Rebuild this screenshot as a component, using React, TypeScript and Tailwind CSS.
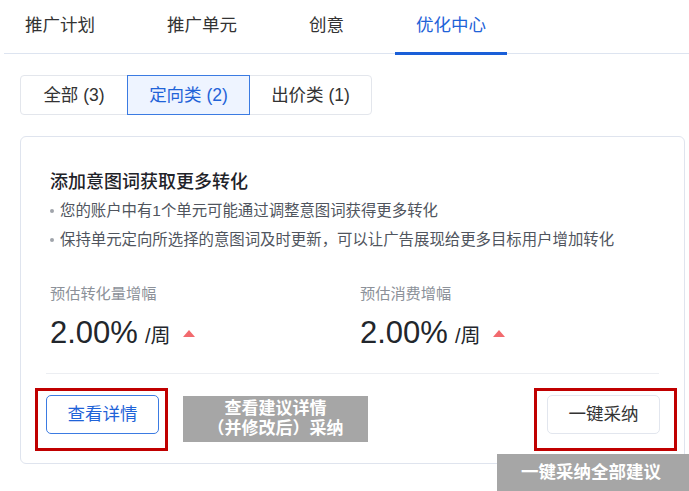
import React from 'react';

const tabs = ['推广计划', '推广单元', '创意', '优化中心'];

const segments = [
  { label: '全部 (3)', width: 'w-[106px]' },
  { label: '定向类 (2)', width: 'w-[123px]' },
  { label: '出价类 (1)', width: 'w-[121px]' },
];

const metrics = [
  { label: '预估转化量增幅', value: '2.00%' },
  { label: '预估消费增幅', value: '2.00%' },
];

function UpTriangle() {
  return (
    <svg width="12" height="7" viewBox="0 0 12 7" className="ml-[13px] self-center">
      <path d="M6 0 L12 7 L0 7 Z" fill="#f26a6e" />
    </svg>
  );
}

export default function App() {
  const activeTab = 3;
  const activeSeg = 1;

  return (
    <div
      className="relative w-[689px] h-[491px] overflow-hidden bg-white text-[#2b2f36]"
      style={{ fontFamily: '"Liberation Sans", "Noto Sans CJK SC", sans-serif' }}
    >
      {/* Tabs */}
      <div className="ml-[4px] flex h-[54px] gap-[30px] border-b border-[#dde4f0]">
        {tabs.map((t, i) => (
          <div
            key={t}
            className={`relative flex items-center px-[21px] pb-[2px] text-[17.5px] ${
              i === activeTab ? 'text-[#1f63d8]' : 'text-[#333]'
            }`}
          >
            {t}
            {i === activeTab && (
              <span className="absolute left-0 right-0 bottom-[-2px] h-[3px] bg-[#1a5fd8]" />
            )}
          </div>
        ))}
      </div>

      {/* Segments */}
      <div className="ml-[20px] mt-[21px] flex h-[40px] w-fit rounded-[4px] border border-[#e3e6ec]">
        {segments.map((s, i) => (
          <div
            key={s.label}
            className={`flex items-center justify-center text-[17.5px] ${s.width} ${
              i === activeSeg
                ? '-my-px border border-[#3b7be2] bg-[#eef4ff] text-[#1f63d8]'
                : 'text-[#333]'
            }`}
          >
            {s.label}
          </div>
        ))}
      </div>

      {/* Card */}
      <div className="ml-[20px] mt-[21px] w-[665px] rounded-[6px] border border-[#dfe4ee] pt-[33px] pb-[29px]">
        <div className="ml-[29px]">
          <h2 className="h-[24px] text-[18px] leading-[24px] font-medium text-[#1f2329]">
            添加意图词获取更多转化
          </h2>
          <div className="mt-[6px] flex h-[22px] items-center gap-[6px] text-[15.4px] text-[#50555e]">
            <span className="h-[4px] w-[4px] rounded-full bg-[#a0a4ab]" />
            您的账户中有1个单元可能通过调整意图词获得更多转化
          </div>
          <div className="mt-[7px] flex h-[22px] items-center gap-[6px] text-[15.4px] text-[#50555e]">
            <span className="h-[4px] w-[4px] rounded-full bg-[#a0a4ab]" />
            保持单元定向所选择的意图词及时更新，可以让广告展现给更多目标用户增加转化
          </div>

          <div className="mt-[33px] flex">
            {metrics.map((m) => (
              <div key={m.label} className="w-[310px]">
                <div className="h-[20px] text-[15.2px] leading-[20px] text-[#8c9199]">{m.label}</div>
                <div className="mt-[11px] flex h-[36px] items-baseline">
                  <span className="text-[31px] leading-[36px] text-[#22262c]">{m.value}</span>
                  <span className="ml-[7px] text-[20px] text-[#22262c]">/周</span>
                  <UpTriangle />
                </div>
              </div>
            ))}
          </div>
        </div>

        <div className="mx-[25px] mt-[22px] h-px bg-[#eceef2]" />

        <div className="mx-[24px] mt-[21px] flex items-center justify-between">
          <button className="ml-px h-[39px] w-[113px] rounded-[5px] border border-[#3b7be2] bg-white text-[17.5px] text-[#1f63d8]">
            查看详情
          </button>
          <button className="h-[39px] w-[113px] rounded-[5px] border border-[#e2e6ee] bg-white text-[17.5px] text-[#333]">
            一键采纳
          </button>
        </div>
      </div>

      {/* Annotation overlays */}
      <div className="absolute left-[35px] top-[388px] h-[63px] w-[133px] border-[3px] border-[#c00000]" />
      <div className="absolute left-[534px] top-[388px] h-[63px] w-[143px] border-[3px] border-[#c00000]" />
      <div className="absolute left-[183px] top-[396px] flex h-[46px] w-[185px] flex-col items-center justify-center bg-[#a6a6a6] text-[17px] leading-[20px] font-bold text-white">
        <span>查看建议详情</span>
        <span>（并修改后）采纳</span>
      </div>
      <div className="absolute left-[497px] top-[454px] flex h-[37px] w-[192px] items-center justify-center bg-[#a6a6a6] pr-[4px] text-[17.5px] font-bold text-white">
        一键采纳全部建议
      </div>
    </div>
  );
}
